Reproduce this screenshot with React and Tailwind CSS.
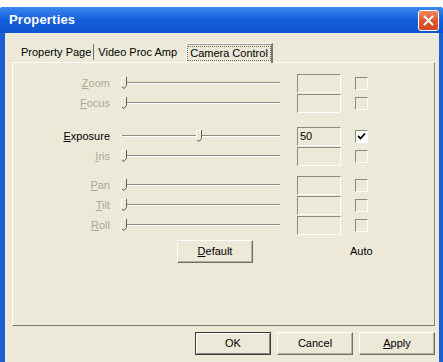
import React from "react";

function Thumb({ left }) {
  return (
    <svg
      className="absolute top-[4px]"
      style={{ left }}
      width="7"
      height="12"
      viewBox="0 0 7 12"
    >
      <path d="M0.5 0.5 H5.5 V8.5 L3 11.5 L0.5 9 Z" fill="#ECE9D8" />
      <path d="M0.5 9 V0.5 H5" fill="none" stroke="#ffffff" />
      <path d="M5.5 0 V8.5 L3 11.5 L1 10" fill="none" stroke="#5f5f5f" />
    </svg>
  );
}

function Row({ label, thumb, enabled, value, checked }) {
  return (
    <div className="flex items-center h-[20px]">
      <div
        className={
          "w-[97px] text-right " + (enabled ? "text-black" : "text-[#ACA899]")
        }
      >
        <span className="underline underline-offset-[1px]">{label[0]}</span>
        {label.slice(1)}
      </div>
      <div className="relative ml-[8px] w-[164px] h-[20px]">
        <div className="absolute left-[4px] top-[9px] w-[158px] h-[2px] border-t border-[#8C8C84] border-b border-b-white" />
        <Thumb left={thumb} />
      </div>
      <div className="ml-[15px] w-[44px] h-[19px] border-t border-l border-[#8A8A82] border-r border-b border-r-white border-b-white flex items-center pl-[2px] text-black">
        {value}
      </div>
      <div
        className={
          "ml-[14px] w-[13px] h-[13px] border-t border-l border-[#8A8A82] border-r border-b border-r-white border-b-white flex items-center justify-center " +
          (checked ? "bg-white" : "")
        }
      >
        {checked && (
          <svg width="9" height="9" viewBox="0 0 9 9">
            <path
              d="M1 4 L3.5 6.5 L8 1.5"
              fill="none"
              stroke="#000"
              strokeWidth="1.8"
            />
          </svg>
        )}
      </div>
    </div>
  );
}

function Btn({ children, isDefault, className = "" }) {
  return (
    <div
      className={
        "w-[76px] h-[23px] flex items-center justify-center bg-[#ECE9D8] text-black " +
        (isDefault
          ? "border border-[#3a3a3a] shadow-[inset_1px_1px_0_#fff,inset_-1px_-1px_0_#8a8a82] "
          : "border-t border-l border-white border-r border-b border-r-[#6f6f6a] border-b-[#6f6f6a] shadow-[inset_-1px_-1px_0_#b5b2a5] ") +
        className
      }
    >
      {children}
    </div>
  );
}

export default function App() {
  return (
    <div className="w-[443px] h-[362px] bg-white pt-[7px] flex flex-col overflow-hidden font-['Liberation_Sans',Arial,sans-serif] text-[11px] text-black">
      <div className="flex-1 flex flex-col bg-gradient-to-r from-[#1A5FD8] via-[#0A52D6] to-[#1A5FD8] rounded-t-[3px]">
        <div className="h-[26px] flex items-center justify-between pl-[9px] pr-[4px] bg-gradient-to-b from-[#3C88EE] via-[#155FDA] to-[#0F55CF] rounded-t-[3px]">
          <span className="text-white font-bold text-[13px] tracking-[0.2px]">
            Properties
          </span>
          <div className="w-[21px] h-[21px] rounded-[3px] border border-white bg-gradient-to-b from-[#EE8A66] via-[#E0552E] to-[#D14A22] flex items-center justify-center">
            <svg width="11" height="11" viewBox="0 0 11 11">
              <path
                d="M1.5 1.5 L9.5 9.5 M9.5 1.5 L1.5 9.5"
                stroke="#fff"
                strokeWidth="2"
                strokeLinecap="round"
              />
            </svg>
          </div>
        </div>
        <div className="flex-1 flex flex-col ml-[5px] mr-[4px] bg-[#ECE9D8]">
          <div className="flex items-end h-[29px] ml-[7px]">
            <div className="flex items-center h-[19px] pl-[9px] pr-[2px]">
              Property Page
            </div>
            <div className="w-[1px] h-[16px] bg-[#6f6f6a] mb-[2px]" />
            <div className="flex items-center h-[19px] pl-[4px] pr-[9px]">
              Video Proc Amp
            </div>
            <div className="h-[20px] w-[87px] border-t border-l border-white border-r-2 border-r-[#7a7a72] shadow-[inset_0_1px_0_#9a9a92] flex items-center justify-center mb-[-1px] relative">
              <span className="border border-dotted border-[#6f6f6a] px-[2px] leading-[13px]">
                Camera Control
              </span>
            </div>
          </div>
          <div className="ml-[7px] mr-[4px] h-[264px] border-t border-l border-white border-r border-b border-r-[#8A8A82] border-b-[#7A7A72] flex flex-col pt-[10px]">
            <Row label="Zoom" thumb={3} />
            <Row label="Focus" thumb={3} />
            <div className="mt-[13px]" />
            <Row label="Exposure" thumb={78} enabled value="50" checked />
            <Row label="Iris" thumb={3} />
            <div className="mt-[9px]" />
            <Row label="Pan" thumb={3} />
            <Row label="Tilt" thumb={3} />
            <Row label="Roll" thumb={3} />
            <div className="flex items-center mt-[5px]">
              <Btn className="ml-[164px] h-[20px]">
                <span>
                  <span className="underline">D</span>efault
                </span>
              </Btn>
              <span className="ml-[97px]">Auto</span>
            </div>
          </div>
          <div className="flex justify-end gap-[6px] mt-[6px] mr-[4px]">
            <Btn isDefault>OK</Btn>
            <Btn>Cancel</Btn>
            <Btn>
              <span>
                <span className="underline">A</span>pply
              </span>
            </Btn>
          </div>
        </div>
      </div>
    </div>
  );
}
